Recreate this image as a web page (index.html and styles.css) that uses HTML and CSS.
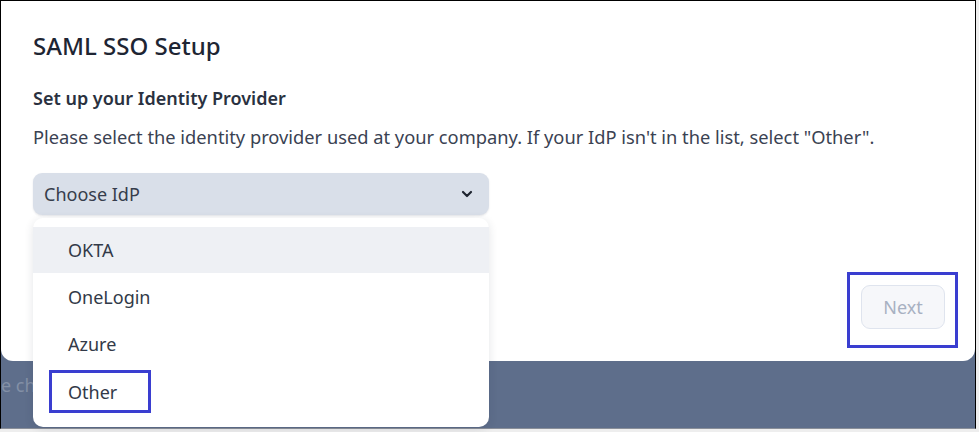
FILE: index.html
```html
<!DOCTYPE html>
<html>
<head>
<meta charset="utf-8">
<link rel="stylesheet" href="styles.css">
</head>
<body>
<div class="frame">
  <div class="modal">
    <h1 class="title">SAML SSO Setup</h1>
    <h2 class="subtitle">Set up your Identity Provider</h2>
    <p class="desc">Please select the identity provider used at your company. If your IdP isn't in the list, select "Other".</p>
    <div class="select-wrap">
      <div class="select">
        <span>Choose IdP</span>
        <svg class="chev" width="12" height="8" viewBox="0 0 12 8"><path d="M2 2l4 4 4-4" fill="none" stroke="#1f2430" stroke-width="2.2" stroke-linecap="round" stroke-linejoin="round"/></svg>
      </div>
      <ul class="menu">
        <li class="item active">OKTA</li>
        <li class="item">OneLogin</li>
        <li class="item">Azure</li>
        <li class="item"><span class="other-mark">Other</span></li>
      </ul>
    </div>
    <div class="footer">
      <div class="next-mark">
        <button class="next" disabled>Next</button>
      </div>
    </div>
  </div>
  <div class="backdrop">
    <span class="behind">e ch</span>
  </div>
</div>
</body>
</html>
```

FILE: styles.css
```css
html, body {
  margin: 0;
  padding: 0;
  background: #eeeeee;
}
body {
  width: 979px;
  height: 432px;
  overflow: hidden;
  font-family: "Noto Sans", "Open Sans", sans-serif;
}
.frame {
  width: 974px;
  height: 427px;
  border: 1px solid #000;
  border-bottom: 1px solid #8a8f99;
  background: #5e6e8b;
  display: flex;
  flex-direction: column;
}
.modal {
  background: #fff;
  height: 360px;
  flex: none;
  box-sizing: border-box;
  padding: 30px 30px 0 32px;
  border-radius: 0 0 12px 12px;
  display: flex;
  flex-direction: column;
  align-items: flex-start;
  position: relative;
  z-index: 1;
}
.title {
  margin: 0;
  font-size: 24px;
  line-height: 30px;
  font-weight: 500;
  color: #1e2533;
}
.subtitle {
  margin: 25px 0 0;
  font-size: 18px;
  line-height: 24px;
  font-weight: 600;
  color: #2a3140;
}
.desc {
  margin: 15px 0 0;
  font-size: 18.3px;
  line-height: 24px;
  color: #3a4252;
  white-space: nowrap;
}
.select-wrap {
  position: relative;
  width: 456px;
  margin-top: 24px;
}
.select {
  height: 42px;
  box-sizing: border-box;
  background: #d9dfe9;
  border-radius: 9px;
  display: flex;
  align-items: center;
  justify-content: space-between;
  padding: 0 16px 0 11px;
  font-size: 18px;
  color: #363d4c;
  box-shadow: 0 1px 2px rgba(40, 50, 70, 0.12);
}
.chev {
  display: block;
}
.menu {
  position: absolute;
  left: 0;
  top: 45px;
  width: 456px;
  height: 209px;
  box-sizing: border-box;
  margin: 0;
  padding: 9px 0 0;
  list-style: none;
  background: #fff;
  border-radius: 10px;
  box-shadow: 0 2px 10px rgba(30, 40, 60, 0.12);
  z-index: 2;
}
.item {
  height: 47px;
  display: flex;
  align-items: center;
  padding-left: 35px;
  font-size: 18px;
  color: #323a48;
}
.item.active {
  background: #eef0f4;
  height: 46px;
}
.other-mark {
  margin-left: -19px;
  margin-top: 2px;
  width: 102px;
  height: 43px;
  flex: none;
  box-sizing: border-box;
  border: 3px solid #3a3ed0;
  display: flex;
  align-items: center;
  padding-left: 16px;
}
.footer {
  display: flex;
  justify-content: flex-end;
  align-self: stretch;
  margin-top: 57px;
}
.next-mark {
  width: 111px;
  height: 76px;
  box-sizing: border-box;
  border: 3px solid #3a3ed0;
  margin-right: -13px;
  display: flex;
  align-items: flex-start;
  justify-content: flex-start;
  padding: 10px 0 0 11px;
}
.next {
  width: 84px;
  height: 44px;
  border: 1px solid #dfe4ee;
  background: #f6f7fa;
  border-radius: 9px;
  font-family: "Noto Sans", "Open Sans", sans-serif;
  font-size: 18px;
  color: #a8b1c2;
  padding: 0;
}
.backdrop {
  flex: 1;
  padding-top: 4px;
}
.behind {
  display: block;
  margin-left: 0;
  font-size: 18px;
  line-height: 40px;
  color: #8390a6;
}
```
